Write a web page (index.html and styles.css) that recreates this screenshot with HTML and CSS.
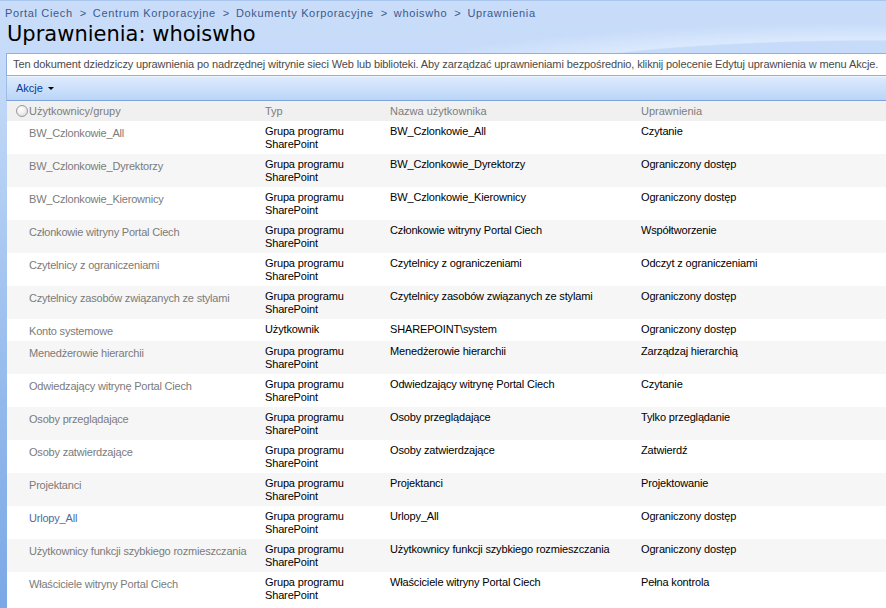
FILE: index.html
```html
<!DOCTYPE html>
<html lang="pl">
<head>
<meta charset="utf-8">
<title>Uprawnienia: whoiswho</title>
<link rel="stylesheet" href="styles.css">
</head>
<body>
<div class="page">
  <div class="crumbs"><a href="#">Portal Ciech</a><span class="sep">&gt;</span><a href="#">Centrum Korporacyjne</a><span class="sep">&gt;</span><a href="#">Dokumenty Korporacyjne</a><span class="sep">&gt;</span><a href="#">whoiswho</a><span class="sep">&gt;</span><span class="cur">Uprawnienia</span></div>
  <h1 class="title">Uprawnienia: whoiswho</h1>
  <div class="main">
    <div class="notice">Ten dokument dziedziczy uprawnienia po nadrzędnej witrynie sieci Web lub biblioteki. Aby zarządzać uprawnieniami bezpośrednio, kliknij polecenie Edytuj uprawnienia w menu Akcje.</div>
    <div class="toolbar"><a class="menu" href="#">Akcje <span class="caret"></span></a></div>
    <table class="perms">
      <colgroup><col class="c1"><col class="c2"><col class="c3"><col class="c4"></colgroup>
      <thead>
        <tr><th class="first"><span class="radio"></span>Użytkownicy/grupy</th><th>Typ</th><th>Nazwa użytkownika</th><th>Uprawnienia</th></tr>
      </thead>
      <tbody>
        <tr><td class="first"><a class="v" href="#">BW_Czlonkowie_All</a></td><td>Grupa programu<br>SharePoint</td><td>BW_Czlonkowie_All</td><td>Czytanie</td></tr>
        <tr class="alt"><td class="first"><a class="v" href="#">BW_Czlonkowie_Dyrektorzy</a></td><td>Grupa programu<br>SharePoint</td><td>BW_Czlonkowie_Dyrektorzy</td><td>Ograniczony dostęp</td></tr>
        <tr><td class="first"><a class="v" href="#">BW_Czlonkowie_Kierownicy</a></td><td>Grupa programu<br>SharePoint</td><td>BW_Czlonkowie_Kierownicy</td><td>Ograniczony dostęp</td></tr>
        <tr class="alt"><td class="first"><a class="v" href="#">Członkowie witryny Portal Ciech</a></td><td>Grupa programu<br>SharePoint</td><td>Członkowie witryny Portal Ciech</td><td>Współtworzenie</td></tr>
        <tr><td class="first"><a class="v" href="#">Czytelnicy z ograniczeniami</a></td><td>Grupa programu<br>SharePoint</td><td>Czytelnicy z ograniczeniami</td><td>Odczyt z ograniczeniami</td></tr>
        <tr class="alt"><td class="first"><a class="v" href="#">Czytelnicy zasobów związanych ze stylami</a></td><td>Grupa programu<br>SharePoint</td><td>Czytelnicy zasobów związanych ze stylami</td><td>Ograniczony dostęp</td></tr>
        <tr><td class="first"><a class="v" href="#">Konto systemowe</a></td><td>Użytkownik</td><td>SHAREPOINT\system</td><td>Ograniczony dostęp</td></tr>
        <tr class="alt"><td class="first"><a class="v" href="#">Menedżerowie hierarchii</a></td><td>Grupa programu<br>SharePoint</td><td>Menedżerowie hierarchii</td><td>Zarządzaj hierarchią</td></tr>
        <tr><td class="first"><a class="v" href="#">Odwiedzający witrynę Portal Ciech</a></td><td>Grupa programu<br>SharePoint</td><td>Odwiedzający witrynę Portal Ciech</td><td>Czytanie</td></tr>
        <tr class="alt"><td class="first"><a class="v" href="#">Osoby przeglądające</a></td><td>Grupa programu<br>SharePoint</td><td>Osoby przeglądające</td><td>Tylko przeglądanie</td></tr>
        <tr><td class="first"><a class="v" href="#">Osoby zatwierdzające</a></td><td>Grupa programu<br>SharePoint</td><td>Osoby zatwierdzające</td><td>Zatwierdź</td></tr>
        <tr class="alt"><td class="first"><a class="v" href="#">Projektanci</a></td><td>Grupa programu<br>SharePoint</td><td>Projektanci</td><td>Projektowanie</td></tr>
        <tr><td class="first"><a class="u" href="#">Urlopy_All</a></td><td>Grupa programu<br>SharePoint</td><td>Urlopy_All</td><td>Ograniczony dostęp</td></tr>
        <tr class="alt"><td class="first"><a class="v" href="#">Użytkownicy funkcji szybkiego rozmieszczania</a></td><td>Grupa programu<br>SharePoint</td><td>Użytkownicy funkcji szybkiego rozmieszczania</td><td>Ograniczony dostęp</td></tr>
        <tr><td class="first"><a class="v" href="#">Właściciele witryny Portal Ciech</a></td><td>Grupa programu<br>SharePoint</td><td>Właściciele witryny Portal Ciech</td><td>Pełna kontrola</td></tr>
      </tbody>
    </table>
    <div class="after"></div>
  </div>
</div>
</body>
</html>
```

FILE: styles.css
```css
html, body {
  margin: 0;
  padding: 0;
  height: 100%;
}
body {
  font-family: "Liberation Sans", Arial, sans-serif;
  font-size: 11px;
  color: #000;
  overflow: hidden;
  background: linear-gradient(to bottom, #c9ddf9 0px, #c6dbf9 60px, #b0cdf3 200px, #93b9ec 400px, #7ba8e6 608px);
}
.page {
  min-height: 100%;
  border-top: 1px solid #a9c6ee;
  box-sizing: border-box;
  background:
    radial-gradient(ellipse 520px 60px at 880px 82px, rgba(255,255,255,0) 70%, rgba(235,244,255,0.55) 72%, rgba(235,244,255,0) 100%);
}
.crumbs {
  padding: 6px 0 0 5px;
  height: 13px;
  line-height: 13px;
  letter-spacing: 0.65px;
  white-space: nowrap;
}
.crumbs a, .crumbs .cur {
  color: #3c5a8a;
  text-decoration: none;
}
.crumbs .sep {
  color: #3c5a8a;
  display: inline-block;
  margin: 0 6px 0 7px;
}
.title {
  margin: 2px 0 0 7px;
  font-family: "DejaVu Sans", Verdana, sans-serif;
  font-weight: normal;
  font-size: 21px;
  line-height: 24px;
  height: 24px;
  color: #000;
}
.main {
  margin: 7px 0 0 6px;
}
.notice {
  border: 1px solid #8eb1e0;
  border-right: none;
  background: #fff;
  height: 21px;
  line-height: 21px;
  padding-left: 6px;
  color: #4a4a4a;
  white-space: nowrap;
  overflow: hidden;
  letter-spacing: -0.12px;
}
.toolbar {
  border-left: 1px solid #9dbde6;
  border-bottom: 1px solid #7ca3db;
  height: 24px;
  line-height: 24px;
  padding-left: 9px;
  background: linear-gradient(to bottom, #f0f6ff 0px, #dceafd 2px, #cfe2fb 10px, #bad5f8 24px);
}
.menu {
  color: #0a3c9c;
  text-decoration: none;
  font-size: 11px;
}
.caret {
  display: inline-block;
  width: 0;
  height: 0;
  border-left: 3px solid transparent;
  border-right: 3px solid transparent;
  border-top: 3px solid #000;
  vertical-align: middle;
  margin-left: 2px;
  margin-bottom: 2px;
}
.perms {
  border-collapse: collapse;
  border-spacing: 0;
  margin-left: 1px;
  width: 879px;
  table-layout: fixed;
  background: #fff;
}
.c1 { width: 254px; }
.c2 { width: 125px; }
.c3 { width: 251px; }
.c4 { width: auto; }
.perms th {
  background: #f0f0f0;
  color: #7d7d7d;
  font-weight: normal;
  text-align: left;
  line-height: 13px;
  padding: 3px 4px 3px 4px;
  vertical-align: middle;
  white-space: nowrap;
  border-top: 1px solid #edf3fc;
}
.perms th.first {
  padding-left: 9px;
}
.radio {
  display: inline-block;
  width: 10px;
  height: 10px;
  border-radius: 50%;
  border: 1px solid #9a9a9a;
  background: radial-gradient(circle at 40% 35%, #ffffff 0%, #f2f2f2 40%, #cfcfcf 100%);
  vertical-align: -2px;
  margin-right: 1px;
}
.perms td {
  vertical-align: top;
  line-height: 13px;
  padding: 4px 4px 3px 4px;
  white-space: nowrap;
  letter-spacing: -0.15px;
}
.perms td.first {
  padding: 6px 4px 3px 22px;
  letter-spacing: -0.2px;
}
.perms tr.alt td {
  background: #f6f6f6;
}
.perms a {
  text-decoration: none;
}
.perms a.v {
  color: #7b7b7b;
}
.perms a.u {
  color: #4e6c9e;
}
.after {
  margin-left: 1px;
  height: 20px;
  background: #fff;
}
```
